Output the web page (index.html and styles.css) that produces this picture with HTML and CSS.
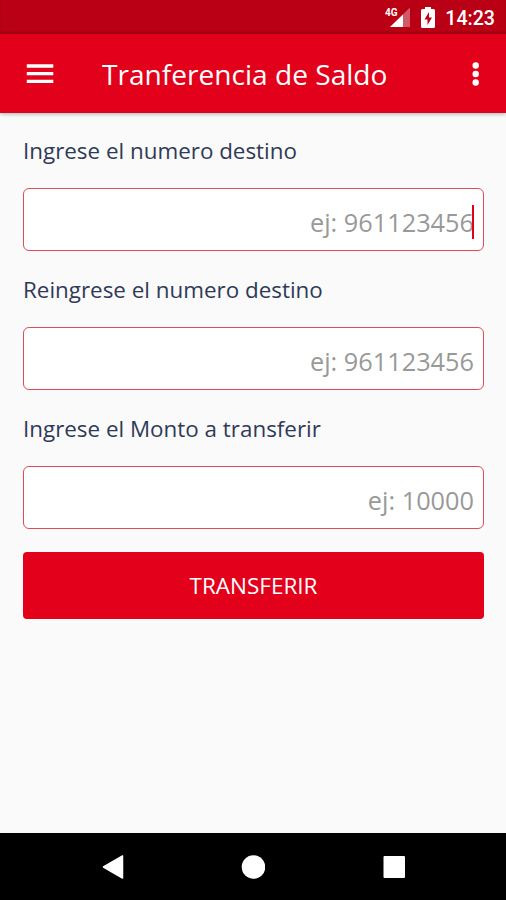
FILE: index.html
```html
<!DOCTYPE html>
<html lang="es">
<head>
    <meta charset="UTF-8">
    <meta name="viewport" content="width=device-width, initial-scale=1.0">
    <title>Tranferencia de Saldo</title>
    <link rel="stylesheet" href="styles.css">
</head>
<body>
    <div class="status-bar">
        <svg width="26" height="21" viewBox="0 0 26 21">
            <path d="M5 20L25 0.500v19.500z" fill="#fff" opacity="0.35"/>
            <path d="M5 20L18 7.500v12.500z" fill="#fff"/>
            <text class="network" x="0" y="8.500">4G</text>
        </svg>
        <svg class="battery" width="14" height="21" viewBox="0 0 14 21">
            <path d="M4 0h6v2h2.500q1.500 0 1.500 1.500v16q0 1.500-1.500 1.500h-11q-1.500 0-1.500-1.500v-16q0-1.500 1.500-1.500H4z" fill="#fff"/>
            <path d="M8 5L3.500 12.500h3V18L11 10.500H8z" fill="#b90014"/>
        </svg>
        <span class="clock">14:23</span>
    </div>

    <header class="app-bar">
        <svg width="28" height="20" viewBox="0 0 28 20">
            <path d="M0.800 2H27.300M0.800 9.700H27.300M0.800 17.400H27.300" stroke="#fff" stroke-width="3.300"/>
        </svg>
        <h1>Tranferencia de Saldo</h1>
        <svg width="8" height="24" viewBox="0 0 8 24">
            <circle cx="3.700" cy="3.500" r="3.200" fill="#fff"/>
            <circle cx="3.700" cy="12" r="3.200" fill="#fff"/>
            <circle cx="3.700" cy="20.500" r="3.200" fill="#fff"/>
        </svg>
    </header>

    <form class="container">
        <label for="destino">Ingrese el numero destino</label>
        <div class="input-group">
            <input type="text" id="destino" placeholder="ej: 961123456">
            <span class="caret"></span>
        </div>
        <label for="redestino">Reingrese el numero destino</label>
        <div class="input-group">
            <input type="text" id="redestino" placeholder="ej: 961123456">
        </div>
        <label for="monto">Ingrese el Monto a transferir</label>
        <div class="input-group">
            <input type="text" id="monto" placeholder="ej: 10000">
        </div>
        <button type="button">TRANSFERIR</button>
    </form>

    <nav class="nav-bar">
        <svg width="24" height="26" viewBox="0 0 24 26">
            <path d="M2.500 13L21.500 2v22z" fill="#fff" stroke="#fff" stroke-width="1.500" stroke-linejoin="round"/>
        </svg>
        <svg width="24" height="26" viewBox="0 0 24 26">
            <circle cx="12.500" cy="13" r="11.800" fill="#fff"/>
        </svg>
        <svg width="24" height="26" viewBox="0 0 24 26">
            <rect x="1.500" y="2" width="21.500" height="22" rx="1" fill="#fff"/>
        </svg>
    </nav>
</body>
</html>
```

FILE: styles.css
```css
* {
    margin: 0;
    padding: 0;
    box-sizing: border-box;
    font-family: 'Open Sans', sans-serif;
}

body {
    height: 100vh;
    display: flex;
    flex-direction: column;
    background: #fafafa;
    overflow: hidden;
}

.status-bar {
    height: 34px;
    display: flex;
    justify-content: flex-end;
    align-items: center;
    padding-right: 11px;
    background: #b90014;
    box-shadow: inset 0 -2px 2px rgba(0, 0, 0, 0.1);
    color: #fff;
}

.network {
    font-family: Roboto, sans-serif;
    font-size: 10px;
    font-weight: 700;
    fill: #fff;
}

.battery {
    margin-left: 10px;
}

.clock {
    margin-left: 10px;
    padding-top: 2px;
    font-family: Roboto, sans-serif;
    font-size: 19.600px;
    font-weight: 500;
}

.app-bar {
    height: 79px;
    display: flex;
    align-items: center;
    padding: 0 26px;
    background: #e3001b;
    box-shadow: 0 1px 4px rgba(0, 40, 50, 0.35);
    color: #fff;
}

h1 {
    flex: 1;
    margin-left: 48px;
    font-size: 28.100px;
    font-weight: 400;
    white-space: nowrap;
}

.container {
    flex: 1;
    display: flex;
    flex-direction: column;
    padding: 21px 22px 0 23px;
}

label {
    height: 34px;
    margin-bottom: 20px;
    font-size: 22.400px;
    font-weight: 400;
    line-height: 34px;
    color: #303a57;
}

.input-group {
    position: relative;
    height: 63px;
    margin-bottom: 22px;
}

input {
    width: 100%;
    height: 100%;
    padding: 5px 9px 0;
    border: 1.500px solid #df4b59;
    border-radius: 6px;
    background: #fff;
    font-size: 25.300px;
    text-align: right;
    outline: none;
}

input::placeholder {
    color: #999;
}

/* blinking cursor of the focused field */
.caret {
    position: absolute;
    top: 17px;
    right: 10px;
    width: 2.500px;
    height: 34px;
    background: #e3001b;
}

button {
    height: 67px;
    margin-top: 1px;
    border: none;
    border-radius: 4px;
    background: #e3001b;
    color: #fff;
    font-size: 22.500px;
}

.nav-bar {
    height: 67px;
    display: flex;
    justify-content: center;
    align-items: center;
    gap: 116.500px;
    background: #000;
}
```
